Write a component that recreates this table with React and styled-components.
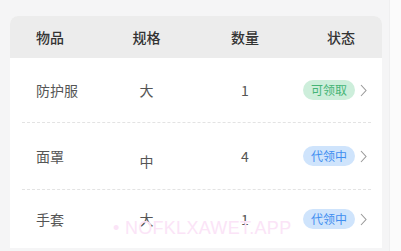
import React from "react";
import styled, { createGlobalStyle } from "styled-components";

const Global = createGlobalStyle`
  html, body { margin: 0; padding: 0; overflow: hidden; }
  body {
    background: #f5f5f6;
    font-family: "Noto Sans CJK SC", "Noto Sans", sans-serif;
  }
`;

const Page = styled.div`
  display: flex;
  width: 401px;
  height: 251px;
  overflow: hidden;
  position: relative;
`;

const Main = styled.div`
  flex: 1;
  padding: 16px 7px 0 10px;
`;

const Track = styled.div`
  width: 11px;
  background: #fbfbfb;
  border-left: 1px solid #efeff0;
`;

const Card = styled.div`
  background: #fff;
  border-radius: 8px 8px 0 0;
  overflow: hidden;
`;

const Grid = styled.div`
  display: grid;
  grid-template-columns: 61px 99px 98px 1fr;
  align-items: center;
  padding-left: 26px;
  height: ${(p) => p.$h}px;
`;

const Header = styled(Grid)`
  background: #ececec;
`;

const HeadCell = styled.div`
  font-size: 14px;
  font-weight: 500;
  color: #333;
  text-align: ${(p) => (p.$left ? "left" : "center")};
  padding-left: ${(p) => p.$pl || 0}px;
`;

const Row = styled(Grid)`
  position: relative;
`;

const Divider = styled.div`
  margin: 0 11px 0 12px;
  border-bottom: 1px dashed #e3e3e3;
`;

const Cell = styled.div`
  font-size: 14px;
  color: #555;
  text-align: ${(p) => (p.$left ? "left" : "center")};
  transform: translateY(${(p) => p.$dy || 0}px);
`;

const StatusCell = styled.div`
  display: flex;
  align-items: center;
  padding-left: 9px;
  gap: 5px;
`;

const Badge = styled.span`
  display: inline-flex;
  align-items: center;
  justify-content: center;
  height: 20px;
  padding: 0 8px;
  border-radius: 10px;
  font-size: 12px;
  line-height: 20px;
  background: ${(p) => (p.$tone === "green" ? "#cdeedb" : "#cfe4fc")};
  color: ${(p) => (p.$tone === "green" ? "#45b476" : "#3f8ef0")};
`;

const Watermark = styled.div`
  position: absolute;
  left: 113px;
  top: 218px;
  font-family: "Liberation Sans", Arial, sans-serif;
  font-size: 18px;
  color: #fbe4f7;
  white-space: nowrap;
  pointer-events: none;
  letter-spacing: 0.3px;
`;

const Chevron = () => (
  <svg width="7" height="13" viewBox="0 0 7 13" fill="none">
    <path d="M1 1l5 5.5L1 12" stroke="#9a9a9a" strokeWidth="1.1" />
  </svg>
);

const rows = [
  { name: "防护服", size: "大", qty: "1", status: "可领取", tone: "green", h: 64 },
  { name: "面罩", size: "中", qty: "4", status: "代领中", tone: "blue", h: 66, dy: 5 },
  { name: "手套", size: "大", qty: "1", status: "代领中", tone: "blue", h: 58 },
];

export default function App() {
  return (
    <>
      <Global />
      <Page>
        <Main>
          <Card>
            <Header $h={42}>
              <HeadCell $left>物品</HeadCell>
              <HeadCell>规格</HeadCell>
              <HeadCell>数量</HeadCell>
              <HeadCell $pl={6}>状态</HeadCell>
            </Header>
            {rows.map((r, i) => (
              <React.Fragment key={i}>
                {i > 0 && <Divider />}
                <Row $h={r.h}>
                  <Cell $left>{r.name}</Cell>
                  <Cell $dy={r.dy}>{r.size}</Cell>
                  <Cell>{r.qty}</Cell>
                  <StatusCell>
                    <Badge $tone={r.tone}>{r.status}</Badge>
                    <Chevron />
                  </StatusCell>
                </Row>
              </React.Fragment>
            ))}
          </Card>
        </Main>
        <Track />
        <Watermark>• NOFKLXAWET.APP</Watermark>
      </Page>
    </>
  );
}
